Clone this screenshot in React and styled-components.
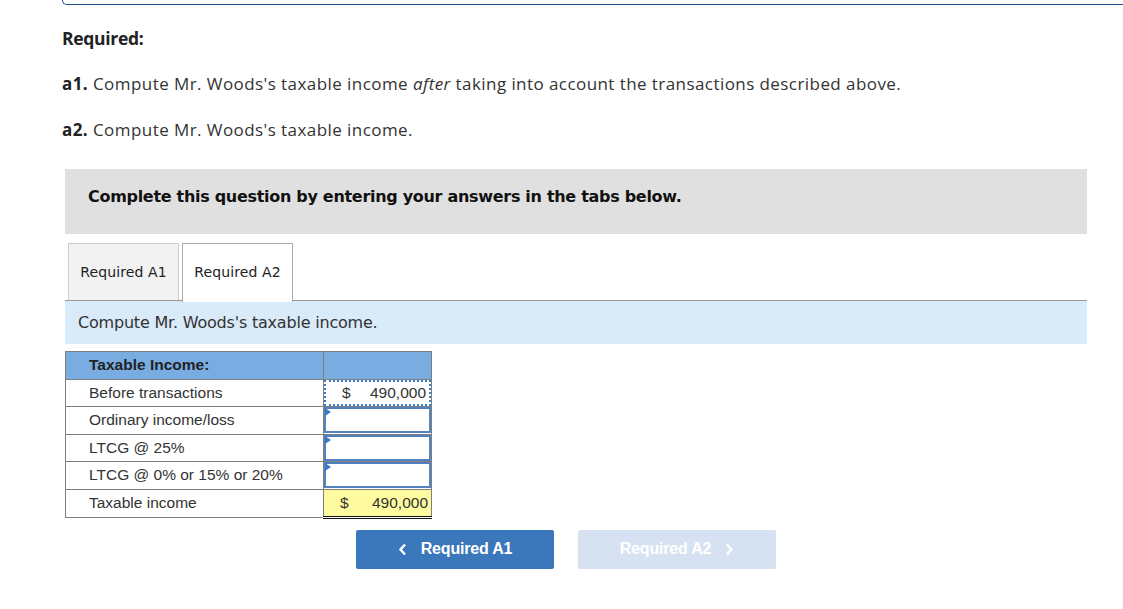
import styled, { createGlobalStyle } from "styled-components"

const GlobalStyle = createGlobalStyle`
    body {
        margin: 0;
        background: #ffffff;
        font-family: "Open Sans", "Liberation Sans", sans-serif;
        color: #333333;
    }
`

const Page = styled.div`
    width: 1123px;
    height: 609px;
    overflow: hidden;
    padding-left: 62px;
    box-sizing: border-box;
`

const TopFrame = styled.div`
    height: 4px;
    margin-right: -20px;
    border-left: 1.5px solid #1f4e8c;
    border-bottom: 1.5px solid #1f4e8c;
    border-bottom-left-radius: 8px;
`

const Heading = styled.div`
    margin-top: 23px;
    font-family: "Open Sans", sans-serif;
    font-weight: 700;
    font-size: 17.5px;
    line-height: 20px;
    color: #222;
    letter-spacing: -0.3px;
`

const Question = styled.p`
    margin: ${p => p.$top}px 0 0;
    font-family: "Open Sans", sans-serif;
    font-size: 17px;
    line-height: 20px;
    letter-spacing: 0.43px;
    color: #333;

    b { color: #222; }
`

const InstructBox = styled.div`
    margin: 29px 0 0 3px;
    width: 1022px;
    height: 65px;
    background: #e0e0e0;
    display: flex;
    align-items: center;
    padding: 0 0 10px 23px;
    box-sizing: border-box;
    font-family: "DejaVu Sans", sans-serif;
    font-weight: 700;
    font-size: 16px;
    letter-spacing: -0.3px;
    color: #111;
`

const TabRow = styled.div`
    margin: 9px 0 0 3px;
    width: 1022px;
    display: flex;
    gap: 3px;
    padding-left: 3px;
    box-sizing: border-box;
    border-bottom: 1.5px solid #999;
`

const Tab = styled.div`
    width: 111px;
    box-sizing: border-box;
    border: 1px solid ${p => (p.$active ? "#aaa" : "#ccc")};
    border-bottom: none;
    background: ${p => (p.$active ? "#fff" : "#f2f2f2")};
    margin-bottom: ${p => (p.$active ? "-1.5px" : "0")};
    height: ${p => (p.$active ? "58.5px" : "57px")};
    padding-bottom: ${p => (p.$active ? "1.5px" : "0")};
    display: flex;
    align-items: center;
    justify-content: center;
    font-family: "DejaVu Sans", sans-serif;
    font-size: 14px;
    letter-spacing: 0.1px;
    color: #222;
`

const InfoBar = styled.div`
    margin-left: 3px;
    width: 1022px;
    height: 43px;
    background: #d9eaf8;
    padding-left: 13px;
    box-sizing: border-box;
    display: flex;
    align-items: center;
    font-family: "DejaVu Sans", sans-serif;
    font-size: 16px;
    letter-spacing: -0.2px;
    color: #333;
`

const Table = styled.table`
    margin: 7px 0 0 3px;
    border-collapse: collapse;
    font-family: "Liberation Sans", Arial, sans-serif;
    font-size: 15.5px;
    color: #333;

    td {
        height: 27.5px;
        padding: 0;
        border: 1px solid #7f7f7f;
        box-sizing: border-box;
    }
`

const HeadCell = styled.td`
    background: #79ade2;
    font-weight: 700;
    color: #222;
    padding-left: 23px !important;
    width: 258px;
`

const HeadBlank = styled.td`
    background: #79ade2;
    width: 108px;
`

const Label = styled.td`
    padding-left: 23px !important;
`

const ValueCell = styled.td`
    position: relative;
    background: ${p => (p.$total ? "#fdfa9f" : "#fff")};
    border-bottom: ${p => (p.$total ? "3px double #111" : "1px solid #7f7f7f")} !important;
`

const Amount = styled.div`
    display: flex;
    justify-content: space-between;
    align-items: center;
    height: 26px;
    padding: 0 3px 0 16px;
    box-sizing: border-box;
    border: ${p => (p.$dotted ? "2px dotted #3b7bc8" : "none")};
`

const InputBox = styled.div`
    height: 26px;
    box-sizing: border-box;
    border: 2px solid #5583bf;
    border-top-color: #4f7fbc;
`

const Marker = styled.span`
    position: absolute;
    left: 1px;
    top: 1px;
    width: 0;
    height: 0;
    border-top: 4px solid transparent;
    border-bottom: 4px solid transparent;
    border-left: 6px solid #3b78c4;
`

const ButtonRow = styled.div`
    margin: 11px 0 0 294px;
    display: flex;
    gap: 24px;
`

const NavButton = styled.button`
    width: 198px;
    height: 39px;
    border: none;
    border-radius: 2px;
    background: ${p => (p.$disabled ? "#d6e2f1" : "#3b77bb")};
    color: #fff;
    font-family: "Liberation Sans", Arial, sans-serif;
    font-weight: 700;
    font-size: 16px;
    letter-spacing: -0.2px;
    display: flex;
    align-items: center;
    justify-content: center;
    gap: 14px;
    padding: 0;
`

const Chevron = ({ dir }) => (
    <svg width="9" height="13" viewBox="0 0 9 13">
        <path
            d={dir === "left" ? "M7 1.5 L2.5 6.5 L7 11.5" : "M2 1.5 L6.5 6.5 L2 11.5"}
            fill="none"
            stroke="#fff"
            strokeWidth="2.4"
        />
    </svg>
)

const rows = [
    { label: "Ordinary income/loss" },
    { label: "LTCG @ 25%" },
    { label: "LTCG @ 0% or 15% or 20%" },
]

export default function App() {
    return (
        <Page>
            <GlobalStyle />
            <TopFrame />
            <Heading>Required:</Heading>
            <Question $top={26}>
                <b>a1.</b> Compute Mr. Woods's taxable income <i>after</i> taking into account the transactions described above.
            </Question>
            <Question $top={26}>
                <b>a2.</b> Compute Mr. Woods's taxable income.
            </Question>

            <InstructBox>Complete this question by entering your answers in the tabs below.</InstructBox>

            <TabRow>
                <Tab>Required A1</Tab>
                <Tab $active>Required A2</Tab>
            </TabRow>
            <InfoBar>Compute Mr. Woods's taxable income.</InfoBar>

            <Table>
                <tbody>
                    <tr>
                        <HeadCell>Taxable Income:</HeadCell>
                        <HeadBlank />
                    </tr>
                    <tr>
                        <Label>Before transactions</Label>
                        <ValueCell>
                            <Amount $dotted><span>$</span><span>490,000</span></Amount>
                        </ValueCell>
                    </tr>
                    {rows.map(r => (
                        <tr key={r.label}>
                            <Label>{r.label}</Label>
                            <ValueCell>
                                <InputBox />
                                <Marker />
                            </ValueCell>
                        </tr>
                    ))}
                    <tr>
                        <Label>Taxable income</Label>
                        <ValueCell $total>
                            <Amount><span>$</span><span>490,000</span></Amount>
                        </ValueCell>
                    </tr>
                </tbody>
            </Table>

            <ButtonRow>
                <NavButton><Chevron dir="left" />Required A1</NavButton>
                <NavButton $disabled>Required A2<Chevron dir="right" /></NavButton>
            </ButtonRow>
        </Page>
    )
}
